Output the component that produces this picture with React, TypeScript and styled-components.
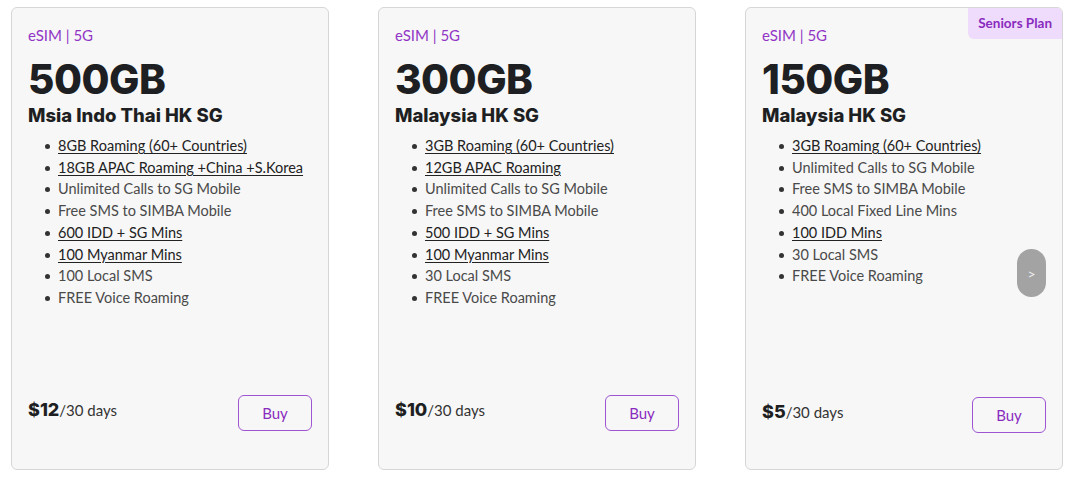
import { createGlobalStyle, styled } from "styled-components";

type Perk = { text: string; link?: boolean };
type Plan = {
  data: string;
  region: string;
  perks: Perk[];
  price: string;
  badge?: string;
};

const plans: Plan[] = [
  {
    data: "500GB",
    region: "Msia Indo Thai HK SG",
    price: "$12",
    perks: [
      { text: "8GB Roaming (60+ Countries)", link: true },
      { text: "18GB APAC Roaming +China +S.Korea", link: true },
      { text: "Unlimited Calls to SG Mobile" },
      { text: "Free SMS to SIMBA Mobile" },
      { text: "600 IDD + SG Mins", link: true },
      { text: "100 Myanmar Mins", link: true },
      { text: "100 Local SMS" },
      { text: "FREE Voice Roaming" },
    ],
  },
  {
    data: "300GB",
    region: "Malaysia HK SG",
    price: "$10",
    perks: [
      { text: "3GB Roaming (60+ Countries)", link: true },
      { text: "12GB APAC Roaming", link: true },
      { text: "Unlimited Calls to SG Mobile" },
      { text: "Free SMS to SIMBA Mobile" },
      { text: "500 IDD + SG Mins", link: true },
      { text: "100 Myanmar Mins", link: true },
      { text: "30 Local SMS" },
      { text: "FREE Voice Roaming" },
    ],
  },
  {
    data: "150GB",
    region: "Malaysia HK SG",
    price: "$5",
    badge: "Seniors Plan",
    perks: [
      { text: "3GB Roaming (60+ Countries)", link: true },
      { text: "Unlimited Calls to SG Mobile" },
      { text: "Free SMS to SIMBA Mobile" },
      { text: "400 Local Fixed Line Mins" },
      { text: "100 IDD Mins", link: true },
      { text: "30 Local SMS" },
      { text: "FREE Voice Roaming" },
    ],
  },
];

export default function App() {
  return (
    <>
      <GlobalStyle />
      <Row>
        {plans.map((p, i) => (
          <Card key={p.data}>
            {p.badge && <Badge>{p.badge}</Badge>}
            <Tag>eSIM | 5G</Tag>
            <Data>{p.data}</Data>
            <Region>{p.region}</Region>
            <Perks>
              {p.perks.map((k) => (
                <PerkItem key={k.text} $link={k.link}>
                  {k.text}
                </PerkItem>
              ))}
            </Perks>
            <Footer $shift={i === 2}>
              <Price>
                <b>{p.price}</b>/30 days
              </Price>
              <BuyButton>Buy</BuyButton>
            </Footer>
            {i === 2 && <NextButton>&gt;</NextButton>}
          </Card>
        ))}
      </Row>
    </>
  );
}

const GlobalStyle = createGlobalStyle`
  body {
    margin: 0;
    background: #ffffff;
    font-family: Lato, "Noto Sans", sans-serif;
  }
`;

const Row = styled.div`
  display: flex;
  gap: 49px;
  padding: 7px 11px;
`;

const Card = styled.div`
  position: relative;
  width: 318px;
  height: 463px;
  box-sizing: border-box;
  background: #f7f7f7;
  border: 1px solid #d6d6d6;
  border-radius: 6px;
  padding: 18px 16px 0 16px;
  display: flex;
  flex-direction: column;
`;

const Badge = styled.div`
  position: absolute;
  top: 0;
  right: 0;
  background: #efdbfb;
  color: #8a2bbf;
  font-weight: 700;
  font-size: 13.5px;
  padding: 7px 10px 8px 10px;
  border-radius: 0 5px 0 6px;
`;

const Tag = styled.div`
  color: #9236c6;
  font-size: 15px;
  line-height: 18px;
`;

const Data = styled.div`
  margin-top: 14px;
  font-family: Inter, Lato, sans-serif;
  font-size: 40.5px;
  font-weight: 800;
  line-height: 44px;
  color: #1e1f22;
  letter-spacing: -0.5px;
`;

const Region = styled.div`
  margin-top: 1px;
  font-family: Inter, Lato, sans-serif;
  font-size: 18.5px;
  font-weight: 800;
  color: #1e1f22;
  line-height: 24px;
`;

const Perks = styled.ul`
  list-style: none;
  margin: 8px 0 0 0;
  padding: 0 0 0 30px;
`;

const PerkItem = styled.li<{ $link?: boolean }>`
  position: relative;
  font-size: 14.5px;
  line-height: 21.7px;
  color: ${(p) => (p.$link ? "#222" : "#4a4a4a")};
  text-decoration: ${(p) => (p.$link ? "underline" : "none")};
  text-underline-offset: 2px;

  &::before {
    content: "";
    position: absolute;
    left: -13px;
    top: 9px;
    width: 5px;
    height: 5px;
    border-radius: 50%;
    background: #333;
  }
`;

const Footer = styled.div<{ $shift?: boolean }>`
  margin-top: auto;
  margin-bottom: ${(p) => (p.$shift ? "36px" : "38px")};
  display: flex;
  justify-content: space-between;
  align-items: center;
`;

const Price = styled.div`
  padding-bottom: 7px;
  font-size: 15px;
  color: #333;
  b {
    font-family: Inter, Lato, sans-serif;
    font-size: 18px;
    font-weight: 800;
    color: #1e1f22;
  }
`;

const BuyButton = styled.button`
  width: 74px;
  height: 36px;
  background: transparent;
  border: 1px solid #9f55d2;
  border-radius: 6px;
  color: #8a2bbf;
  font-family: Lato, "Noto Sans", sans-serif;
  font-size: 15px;
  cursor: pointer;
`;

const NextButton = styled.div`
  position: absolute;
  right: 16px;
  top: 241px;
  width: 29px;
  height: 48px;
  border-radius: 15px;
  background: #a3a3a3;
  color: #eee;
  font-size: 14px;
  display: flex;
  align-items: center;
  justify-content: center;
`;
